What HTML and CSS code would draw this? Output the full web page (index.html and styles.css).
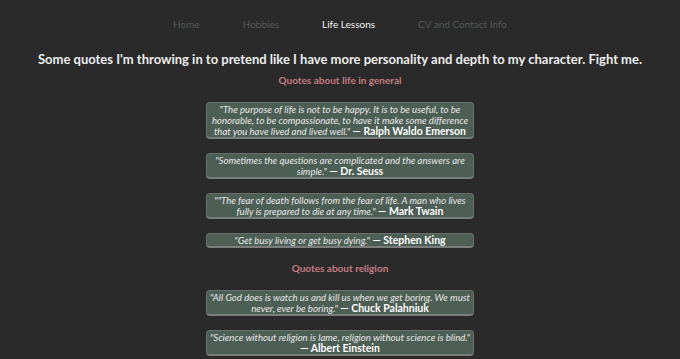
FILE: index.html
```html
<!DOCTYPE html>
<html>
<head>
<meta charset="utf-8">
<link rel="stylesheet" href="styles.css">
</head>
<body>
<nav class="nav">
  <a class="nav-link">Home</a>
  <a class="nav-link">Hobbies</a>
  <a class="nav-link active">Life Lessons</a>
  <a class="nav-link">CV and Contact Info</a>
</nav>
<main class="main">
  <h1 class="title">Some quotes I'm throwing in to pretend like I have more personality and depth to my character. Fight me.</h1>
  <h2 class="section">Quotes about life in general</h2>
  <div class="quotes">
    <p class="quote"><em>"The purpose of life is not to be happy. It is to be useful, to be honorable, to be compassionate, to have it make some difference that you have lived and lived well."</em> <strong>— Ralph Waldo Emerson</strong></p>
    <p class="quote"><em>"Sometimes the questions are complicated and the answers are simple."</em> <strong>— Dr. Seuss</strong></p>
    <p class="quote"><em>""The fear of death follows from the fear of life. A man who lives fully is prepared to die at any time."</em> <strong>— Mark Twain</strong></p>
    <p class="quote"><em>"Get busy living or get busy dying."</em> <strong>— Stephen King</strong></p>
  </div>
  <h2 class="section">Quotes about religion</h2>
  <div class="quotes">
    <p class="quote"><em>"All God does is watch us and kill us when we get boring. We must never, ever be boring."</em> <strong>— Chuck Palahniuk</strong></p>
    <p class="quote"><em>"Science without religion is lame, religion without science is blind."</em> <strong>— Albert Einstein</strong></p>
  </div>
</main>
</body>
</html>
```
FILE: styles.css
```css
html, body {
  margin: 0;
  padding: 0;
  background: #2a2a2a;
  font-family: Lato, "Open Sans", sans-serif;
  color: #f0f0f0;
}
.nav {
  display: flex;
  justify-content: center;
  gap: 43px;
  padding-top: 18px;
  height: 25px;
  font-size: 10px;
  line-height: 12px;
}
.nav-link {
  color: #555a58;
}
.nav-link.active {
  color: #f2f2f2;
}
.main {
  display: flex;
  flex-direction: column;
  align-items: center;
}
.title {
  margin: 8px 0 0;
  font-size: 13px;
  font-weight: 700;
  color: #ececec;
  line-height: 17px;
}
.section {
  margin: 6px 0 15px;
  font-size: 10px;
  font-weight: 700;
  color: #c47d84;
  line-height: 13px;
}
.quotes {
  display: flex;
  flex-direction: column;
  align-items: center;
  gap: 14px;
  margin-bottom: 8px;
}
.quote {
  margin: 0;
  box-sizing: border-box;
  width: 268px;
  padding: 1px 1px 0;
  background: #4d5e55;
  border: 1px solid #68706b;
  border-bottom: 2px solid #7a7d7b;
  border-radius: 4px;
  text-align: center;
  font-size: 9.6px;
  line-height: 11px;
  color: #eeeeee;
}
.quote em {
  font-style: italic;
  color: #e8e8e8;
}
.quote strong {
  font-style: normal;
  font-weight: 700;
  color: #ffffff;
  font-size: 10.5px;
  line-height: 10px;
}
```
